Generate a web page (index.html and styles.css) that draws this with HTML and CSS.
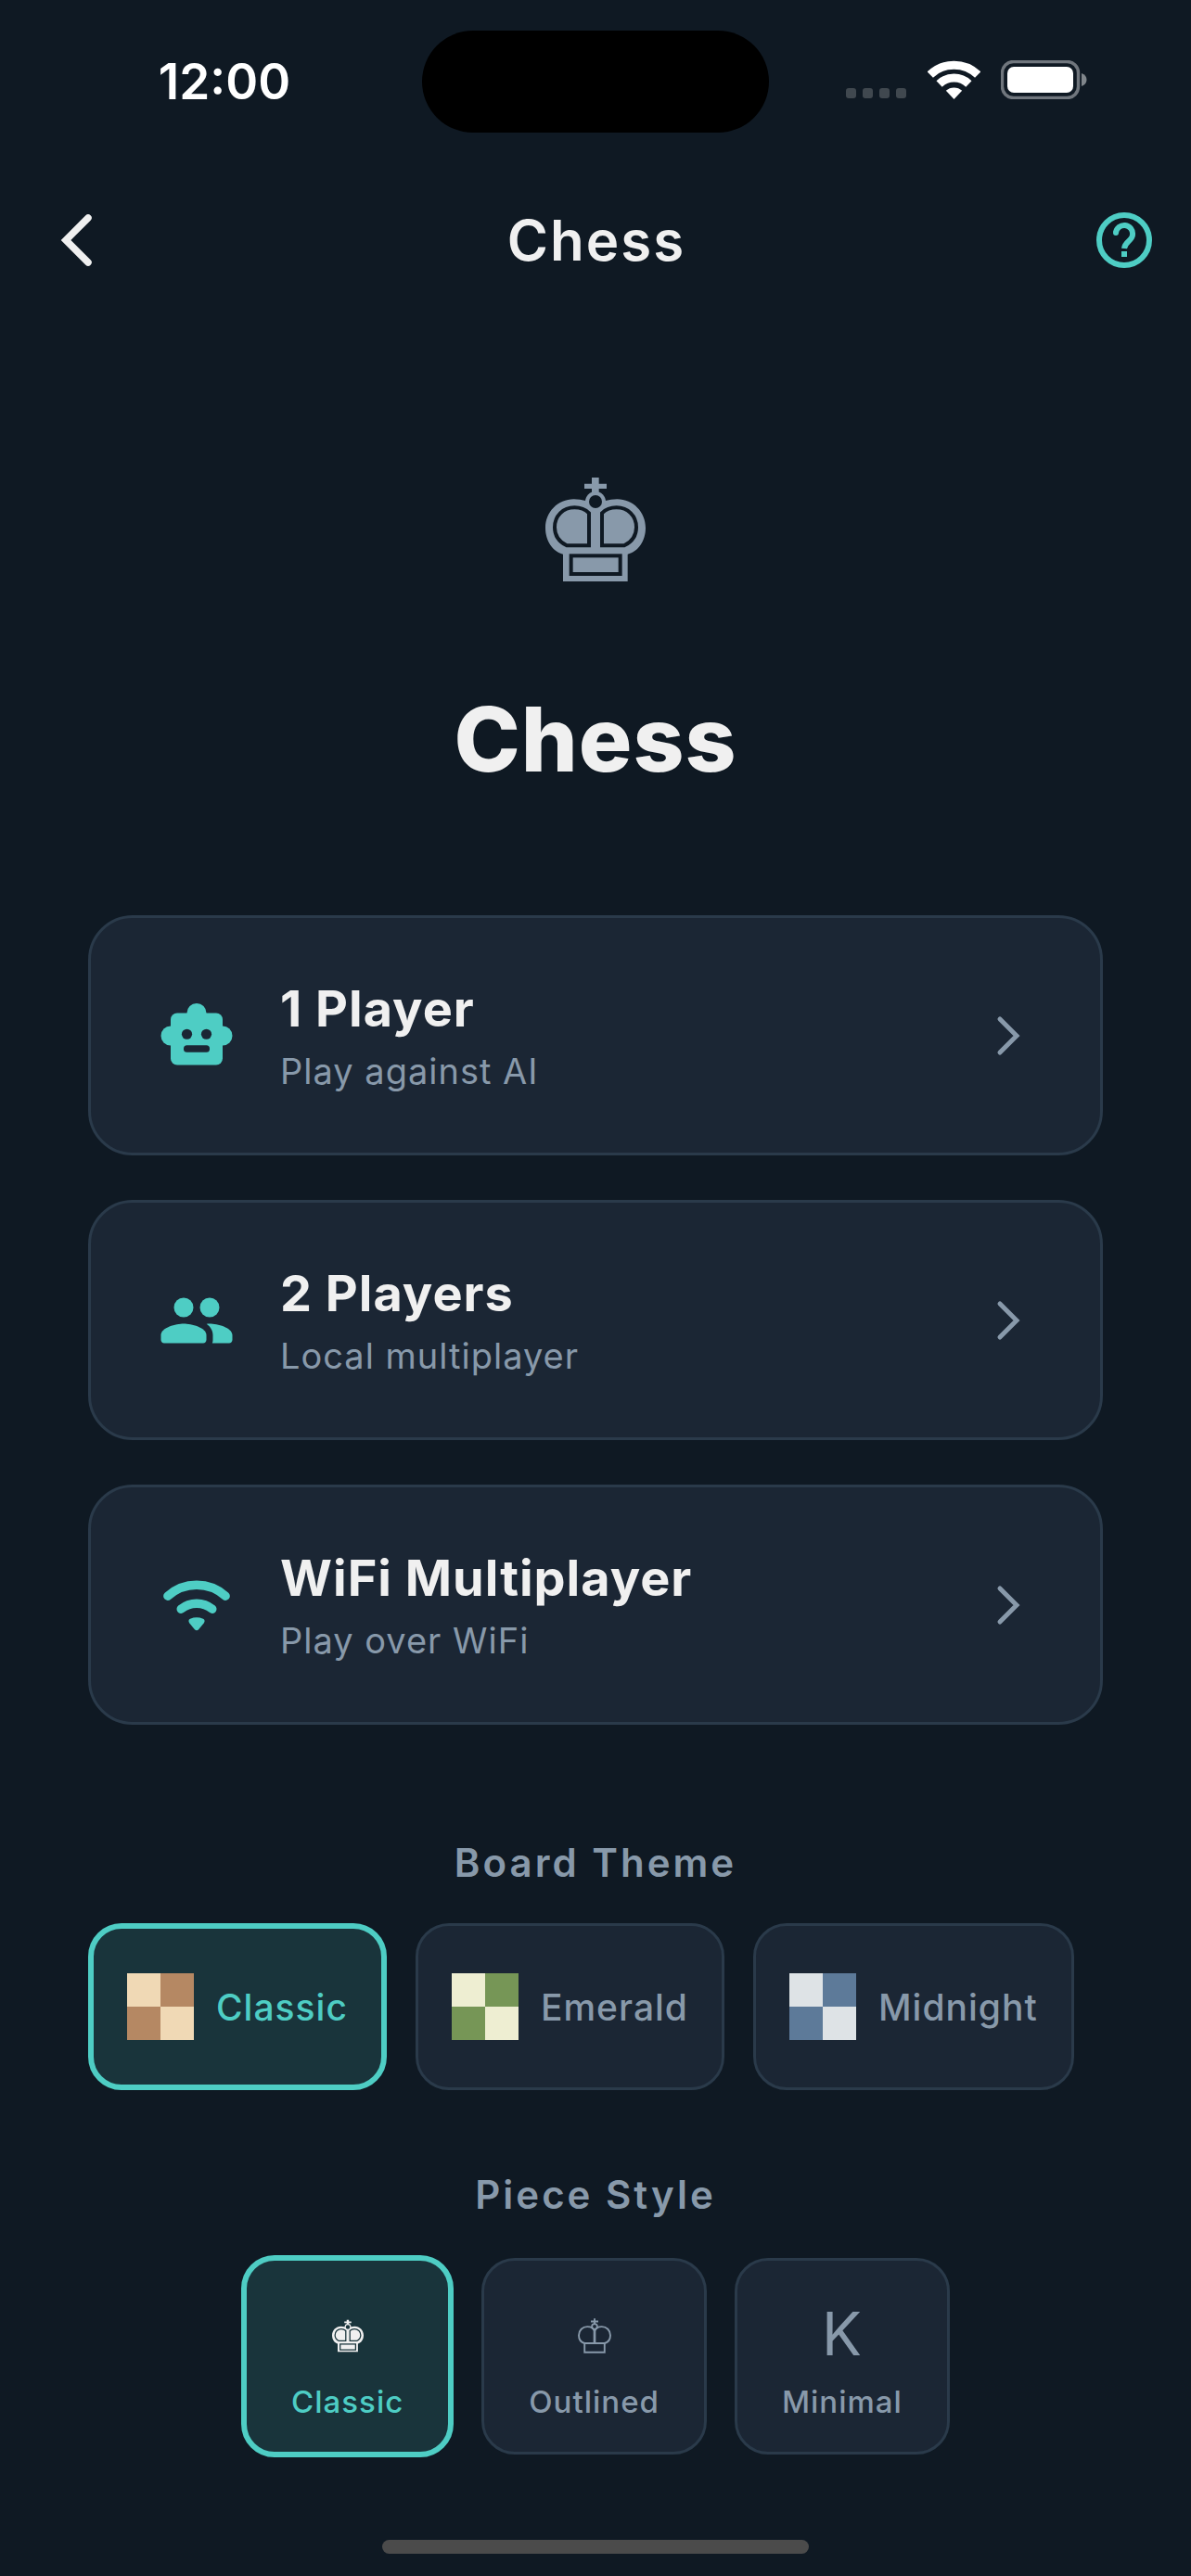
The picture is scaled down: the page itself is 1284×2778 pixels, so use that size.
FILE: index.html
```
<!DOCTYPE html>
<html lang="en">
<head>
    <meta charset="UTF-8">
    <meta name="viewport" content="width=device-width, initial-scale=1.0">
    <title>Chess</title>
    <link rel="stylesheet" href="styles.css">
</head>
<body>
    <!-- shared king shapes -->
    <svg class="sprite" aria-hidden="true">
        <mask id="kingLines" maskUnits="userSpaceOnUse" x="0" y="0" width="324" height="336">
            <rect width="324" height="336" fill="#fff"/>
            <circle cx="162" cy="78" r="21" fill="#000"/>
            <g fill="none" stroke="#000" stroke-width="12">
                <path d="M141 115V220H69C45 208 30 188 30 161C30 124 57 97 94 97C113 97 130 104 141 115Z"/>
                <path d="M183 115V220H255C279 208 294 188 294 161C294 124 267 97 230 97C211 97 194 104 183 115Z"/>
                <rect x="83" y="253" width="159" height="59"/>
            </g>
        </mask>
        <symbol id="kingSolid" viewBox="0 0 324 336">
            <g fill="currentColor" mask="url(#kingLines)">
                <path d="M150 0H173V20H198V36H173V52H150V36H126V20H150Z"/>
                <circle cx="162" cy="78" r="33"/>
                <path d="M130 75Q112 70 92 70C40 70 0 112 0 163C0 205 24 240 57 248V336H266V248C300 240 324 205 324 163C324 112 284 70 232 70Q212 70 194 75L162 100Z"/>
            </g>
        </symbol>
        <symbol id="kingOutline" viewBox="0 0 324 336">
            <g fill="none" stroke="currentColor" stroke-width="17">
                <path d="M162 0V52M126 28H198"/>
                <circle cx="162" cy="78" r="26"/>
                <path stroke-width="24" d="M162 104V238"/>
                <path d="M65 240C30 230 9 200 9 163C9 115 46 79 92 79C125 79 150 92 162 122C174 92 199 79 232 79C278 79 315 115 315 163C315 200 294 230 259 240Z"/>
                <path d="M65 240V328H259V240"/>
            </g>
        </symbol>
    </svg>

    <div class="status-bar">
        <div class="time">12:00</div>
        <div class="island"></div>
        <div class="status-icons">
            <svg width="66" height="42" viewBox="0 0 66 42" fill="#40484f">
                <rect x="0" y="30" width="11" height="11" rx="3"/>
                <rect x="18" y="30" width="11" height="11" rx="3"/>
                <rect x="36" y="30" width="11" height="11" rx="3"/>
                <rect x="54" y="30" width="11" height="11" rx="3"/>
            </svg>
            <svg width="57" height="42" viewBox="0 0 57 42">
                <g fill="none" stroke="#fff">
                    <path stroke-width="9" d="M2.8 15.6A37 37 0 0 1 54.2 15.6"/>
                    <path stroke-width="9" d="M12.6 25.5A23 23 0 0 1 44.4 25.5"/>
                </g>
                <path fill="#fff" d="M28.5 42L19.8 32.8A13 13 0 0 1 37.2 32.8Z"/>
            </svg>
            <svg width="94" height="42" viewBox="0 0 94 42">
                <rect x="1.5" y="1.5" width="82" height="39" rx="12" fill="none" stroke="#70767d" stroke-width="3.4"/>
                <rect x="7" y="7" width="71" height="28" rx="7" fill="#fff"/>
                <path fill="#80868b" d="M87 14Q92.5 16 92.5 21T87 28Z"/>
            </svg>
        </div>
    </div>

    <header class="app-bar">
        <button class="icon-button" aria-label="Back">
            <svg width="72" height="72" viewBox="0 0 72 72">
                <path d="M47 12L23 36L47 60" fill="none" stroke="#f0f0f0" stroke-width="7.5" stroke-linecap="round"/>
            </svg>
        </button>
        <div class="app-title">Chess</div>
        <button class="icon-button help" aria-label="Help">
            <svg width="72" height="72" viewBox="0 0 24 24">
                <circle cx="12" cy="12" r="9" fill="none" stroke="currentColor" stroke-width="2"/>
                <path d="M9 9.3A3 3 0 0 1 15 10C15 12.2 12.2 12.4 12 15" fill="none" stroke="currentColor" stroke-width="2"/>
                <circle cx="9" cy="9.3" r="1" fill="currentColor"/>
                <rect x="11" y="16" width="2" height="2" fill="currentColor"/>
            </svg>
        </button>
    </header>

    <main>
        <svg class="hero-king" aria-hidden="true"><use href="#kingSolid"/></svg>
        <h1>Chess</h1>

        <div class="modes">
            <button class="mode">
                <svg class="mode-icon" viewBox="0 0 24 24">
                    <g fill="currentColor">
                        <circle cx="12" cy="5" r="3"/>
                        <circle cx="4" cy="12" r="3"/>
                        <circle cx="20" cy="12" r="3"/>
                        <rect x="4" y="5" width="16" height="16" rx="2"/>
                    </g>
                    <g fill="#1b2634">
                        <circle cx="9" cy="11.5" r="1.6"/>
                        <circle cx="15" cy="11.5" r="1.6"/>
                        <rect x="8" y="14.9" width="8" height="2.2" rx="1"/>
                    </g>
                </svg>
                <span class="mode-text">
                    <span class="mode-title">1 Player</span>
                    <span class="mode-sub">Play against AI</span>
                </span>
                <svg class="chevron" viewBox="0 0 60 60"><path d="M20 12L38 30L20 48"/></svg>
            </button>
            <button class="mode">
                <svg class="mode-icon" viewBox="0 0 24 24" fill="currentColor">
                    <circle cx="8" cy="8" r="3"/>
                    <circle cx="16" cy="8" r="3"/>
                    <path d="M8 13c-2.33 0-7 1.17-7 3.5V18c0 .55.45 1 1 1h12c.55 0 1-.45 1-1v-1.5c0-2.33-4.67-3.5-7-3.5z"/>
                    <path d="M16 13c-.29 0-.62.02-.97.05.02.01.03.03.04.04 1.14.83 1.93 1.94 1.93 3.41V18c0 .35-.07.69-.18 1H22c.55 0 1-.45 1-1v-1.5c0-2.33-4.67-3.5-7-3.5z"/>
                </svg>
                <span class="mode-text">
                    <span class="mode-title">2 Players</span>
                    <span class="mode-sub">Local multiplayer</span>
                </span>
                <svg class="chevron" viewBox="0 0 60 60"><path d="M20 12L38 30L20 48"/></svg>
            </button>
            <button class="mode">
                <svg class="mode-icon" viewBox="0 0 24 24">
                    <g fill="none" stroke="currentColor" stroke-width="2.7" stroke-linecap="round">
                        <path d="M3.1 9.2A13.3 13.3 0 0 1 20.9 9.2"/>
                        <path d="M7.2 13.2A7.6 7.6 0 0 1 16.8 13.2"/>
                    </g>
                    <path fill="currentColor" d="M11.4 19.5L9.8 17.6Q9.2 16.6 10 16.2Q12 15.4 14 16.2Q14.8 16.6 14.2 17.6L12.6 19.5Q12 20 11.4 19.5Z"/>
                </svg>
                <span class="mode-text">
                    <span class="mode-title">WiFi Multiplayer</span>
                    <span class="mode-sub">Play over WiFi</span>
                </span>
                <svg class="chevron" viewBox="0 0 60 60"><path d="M20 12L38 30L20 48"/></svg>
            </button>
        </div>

        <h2>Board Theme</h2>
        <div class="themes">
            <button class="theme selected"><span class="swatch classic"></span>Classic</button>
            <button class="theme"><span class="swatch emerald"></span>Emerald</button>
            <button class="theme"><span class="swatch midnight"></span>Midnight</button>
            <button class="theme" aria-label="More themes"><span class="swatch"></span></button>
        </div>

        <h2>Piece Style</h2>
        <div class="pieces">
            <button class="piece selected">
                <span class="piece-icon"><svg width="34" height="36"><use href="#kingSolid"/></svg></span>
                Classic
            </button>
            <button class="piece">
                <span class="piece-icon"><svg width="36" height="38"><use href="#kingOutline"/></svg></span>
                Outlined
            </button>
            <button class="piece">
                <span class="piece-icon">K</span>
                Minimal
            </button>
        </div>
    </main>

    <div class="home-indicator"></div>
</body>
</html>
```
FILE: styles.css
```
* {
    box-sizing: border-box;
}
body {
    margin: 0;
    min-height: 100vh;
    display: flex;
    flex-direction: column;
    background: #0f1923;
    color: #f0f0f0;
    font-family: Inter, "Liberation Sans", sans-serif;
}
button {
    margin: 0;
    font-family: inherit;
    cursor: pointer;
}
h1, h2 {
    margin: 0;
    text-align: center;
}
.sprite {
    position: absolute;
    width: 0;
    height: 0;
}

/* status bar */
.status-bar {
    display: grid;
    grid-template-columns: 1fr 374px 1fr;
    align-items: center;
    height: 176px;
}
.time {
    padding-left: 29px;
    text-align: center;
    font-size: 53px;
    font-weight: 600;
    color: #fff;
}
.island {
    height: 110px;
    border-radius: 55px;
    background: #000;
}
.status-icons {
    display: flex;
    justify-content: flex-end;
    gap: 22px;
    padding: 0 111px 4px 0;
}

/* app bar */
.app-bar {
    display: grid;
    grid-template-columns: 1fr auto 1fr;
    align-items: center;
    height: 166px;
    padding: 0 36px 0 48px;
}
.icon-button {
    display: flex;
    justify-self: start;
    padding: 0;
    border: none;
    background: none;
}
.help {
    justify-self: end;
    color: #4ecdc4;
}
.app-title {
    margin-right: 10px;
    font-size: 60px;
    font-weight: 600;
    letter-spacing: 2px;
}

main {
    flex: 1;
    padding: 173px 95px 0;
}
.hero-king {
    display: block;
    width: 108px;
    height: 112px;
    margin: 0 auto 112px;
    color: #8899aa;
}
h1 {
    font-size: 96px;
    line-height: 116px;
    font-weight: 800;
    letter-spacing: 1px;
}

/* game modes */
.modes {
    display: flex;
    flex-direction: column;
    gap: 48px;
    margin-top: 132px;
}
.mode {
    display: flex;
    align-items: center;
    gap: 48px;
    width: 100%;
    height: 259px;
    padding: 0 68px 0 72px;
    border: 3px solid #2a3a4a;
    border-radius: 48px;
    background: #1b2634;
    color: #f0f0f0;
    text-align: left;
}
.mode-icon {
    width: 84px;
    height: 84px;
    color: #4ecdc4;
}
.mode-text {
    flex: 1;
    display: flex;
    flex-direction: column;
    gap: 10px;
}
.mode-title {
    font-size: 54px;
    line-height: 66px;
    font-weight: 700;
    letter-spacing: 1px;
}
.mode-sub {
    font-size: 38px;
    line-height: 48px;
    letter-spacing: 1px;
    color: #8899aa;
}
.chevron {
    width: 60px;
    height: 60px;
    fill: none;
    stroke: #8899aa;
    stroke-width: 5;
    stroke-linecap: round;
}

h2 {
    margin-top: 124px;
    font-size: 42px;
    line-height: 50px;
    font-weight: 600;
    letter-spacing: 3px;
    color: #8899aa;
}

/* board themes */
.themes {
    display: flex;
    gap: 31px;
    margin-top: 40px;
    overflow: hidden;
}
.themes + h2 {
    margin-top: 88px;
}
.theme {
    display: flex;
    align-items: center;
    flex-shrink: 0;
    gap: 24px;
    height: 180px;
    padding: 0 36px;
    border: 3px solid #2a3a4a;
    border-radius: 36px;
    background: #1b2634;
    color: #8899aa;
    font-size: 39px;
    font-weight: 500;
    letter-spacing: 1px;
}
.theme.selected, .piece.selected {
    border: 6px solid #4ecdc4;
    background: #19343b;
    color: #4ecdc4;
}
.swatch {
    width: 72px;
    height: 72px;
}
.swatch.classic {
    background: repeating-conic-gradient(#b58863 0 25%, #f0d9b5 0 50%);
}
.swatch.emerald {
    background: repeating-conic-gradient(#769656 0 25%, #eeeed2 0 50%);
}
.swatch.midnight {
    background: repeating-conic-gradient(#5d7a99 0 25%, #dee3e6 0 50%);
}

/* piece styles */
.pieces {
    display: flex;
    justify-content: center;
    align-items: center;
    gap: 30px;
    margin-top: 40px;
}
.piece {
    display: flex;
    flex-direction: column;
    align-items: center;
    gap: 12px;
    padding: 38px 48px 34px;
    border: 3px solid #2a3a4a;
    border-radius: 36px;
    background: #1b2634;
    color: #8899aa;
    font-size: 33px;
    line-height: 40px;
    font-weight: 500;
    letter-spacing: 1px;
}
.piece-icon {
    display: flex;
    align-items: center;
    height: 82px;
    font-size: 64px;
    font-weight: 400;
}
.piece-icon svg {
    margin-top: 4px;
}
.selected .piece-icon {
    color: #f0f0f0;
}

.home-indicator {
    width: 460px;
    height: 15px;
    margin: 24px auto;
    border-radius: 8px;
    background: #4b4b4b;
}
```
